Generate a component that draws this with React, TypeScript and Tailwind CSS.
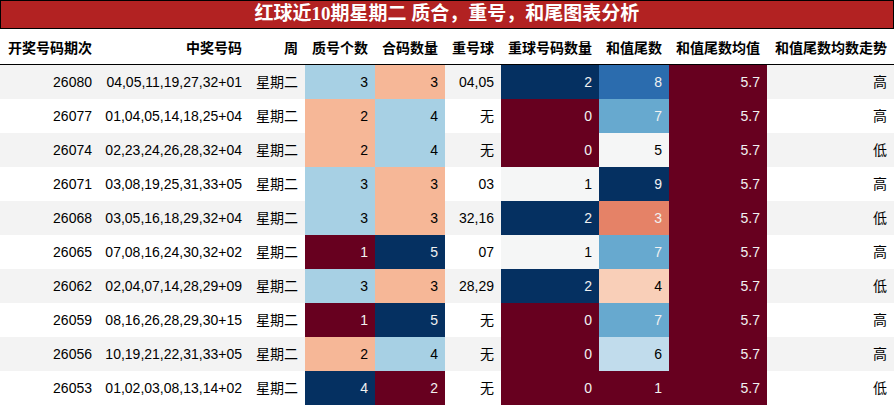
type Cell = { v: string; bg: string; fg: string }

// 颜色 - RdBu 渐变
const C = {
  dr: { bg: 'bg-[#67001f]', fg: 'text-[#f1f1f1]' },
  db: { bg: 'bg-[#053061]', fg: 'text-[#f1f1f1]' },
  lb: { bg: 'bg-[#a7d0e4]', fg: 'text-black' },
  sal: { bg: 'bg-[#f6b797]', fg: 'text-black' },
  mb: { bg: 'bg-[#2b6cae]', fg: 'text-[#f1f1f1]' },
  b7: { bg: 'bg-[#67a9cf]', fg: 'text-[#f1f1f1]' },
  wh: { bg: 'bg-[#f5f6f6]', fg: 'text-black' },
  cor: { bg: 'bg-[#e58267]', fg: 'text-[#f1f1f1]' },
  pch: { bg: 'bg-[#f9cfb8]', fg: 'text-black' },
  pb: { bg: 'bg-[#c1dcec]', fg: 'text-black' },
}
type K = keyof typeof C

const c = (v: string | number, k: K): Cell => ({ v: String(v), ...C[k] })

const headers = ['开奖号码期次', '中奖号码', '周', '质号个数', '合码数量', '重号球', '重球号码数量', '和值尾数', '和值尾数均值', '和值尾数均数走势']

const rows: [string, string, Cell, Cell, string, Cell, Cell, string][] = [
  ['26080', '04,05,11,19,27,32+01', c(3, 'lb'), c(3, 'sal'), '04,05', c(2, 'db'), c(8, 'mb'), '高'],
  ['26077', '01,04,05,14,18,25+04', c(2, 'sal'), c(4, 'lb'), '无', c(0, 'dr'), c(7, 'b7'), '高'],
  ['26074', '02,23,24,26,28,32+04', c(2, 'sal'), c(4, 'lb'), '无', c(0, 'dr'), c(5, 'wh'), '低'],
  ['26071', '03,08,19,25,31,33+05', c(3, 'lb'), c(3, 'sal'), '03', c(1, 'wh'), c(9, 'db'), '高'],
  ['26068', '03,05,16,18,29,32+04', c(3, 'lb'), c(3, 'sal'), '32,16', c(2, 'db'), c(3, 'cor'), '低'],
  ['26065', '07,08,16,24,30,32+02', c(1, 'dr'), c(5, 'db'), '07', c(1, 'wh'), c(7, 'b7'), '高'],
  ['26062', '02,04,07,14,28,29+09', c(3, 'lb'), c(3, 'sal'), '28,29', c(2, 'db'), c(4, 'pch'), '低'],
  ['26059', '08,16,26,28,29,30+15', c(1, 'dr'), c(5, 'db'), '无', c(0, 'dr'), c(7, 'b7'), '高'],
  ['26056', '10,19,21,22,31,33+05', c(2, 'sal'), c(4, 'lb'), '无', c(0, 'dr'), c(6, 'pb'), '高'],
  ['26053', '01,02,03,08,13,14+02', c(4, 'db'), c(2, 'dr'), '无', c(0, 'dr'), c(1, 'dr'), '低'],
]

const grid = 'grid grid-cols-[99px_150px_56px_70px_70px_56px_98px_70px_98px_127px]'

function Td({ children, className = '' }: { children: React.ReactNode; className?: string }) {
  return <div className={`flex items-center justify-end px-[7px] whitespace-nowrap ${className}`}>{children}</div>
}

export default function App() {
  return (
    <div className="w-[894px] h-[406px] overflow-hidden bg-white text-[14px] text-black font-['Liberation_Sans','Noto_Sans_CJK_SC',sans-serif]">
      <div className="h-[29px] flex items-center justify-center bg-[#b22222] border border-black text-white font-bold text-[19px] font-['Liberation_Serif','Noto_Sans_CJK_SC',serif]">
        红球近10期星期二 质合，重号，和尾图表分析
      </div>
      <div className={`${grid} h-[36px] pt-[1px] border-b border-black font-bold font-['Noto_Sans_CJK_SC',sans-serif]`}>
        {headers.map((h) => (
          <Td key={h}>{h}</Td>
        ))}
      </div>
      {rows.map((r, i) => (
        <div key={r[0]} className={`${grid} h-[34px] ${i % 2 === 0 ? 'bg-[#f3f3f3]' : 'bg-white'}`}>
          <Td>{r[0]}</Td>
          <Td>{r[1]}</Td>
          <Td>星期二</Td>
          <Td className={`${r[2].bg} ${r[2].fg}`}>{r[2].v}</Td>
          <Td className={`${r[3].bg} ${r[3].fg}`}>{r[3].v}</Td>
          <Td>{r[4]}</Td>
          <Td className={`${r[5].bg} ${r[5].fg}`}>{r[5].v}</Td>
          <Td className={`${r[6].bg} ${r[6].fg}`}>{r[6].v}</Td>
          <Td className="bg-[#67001f] text-[#f1f1f1]">5.7</Td>
          <Td>{r[7]}</Td>
        </div>
      ))}
    </div>
  )
}
